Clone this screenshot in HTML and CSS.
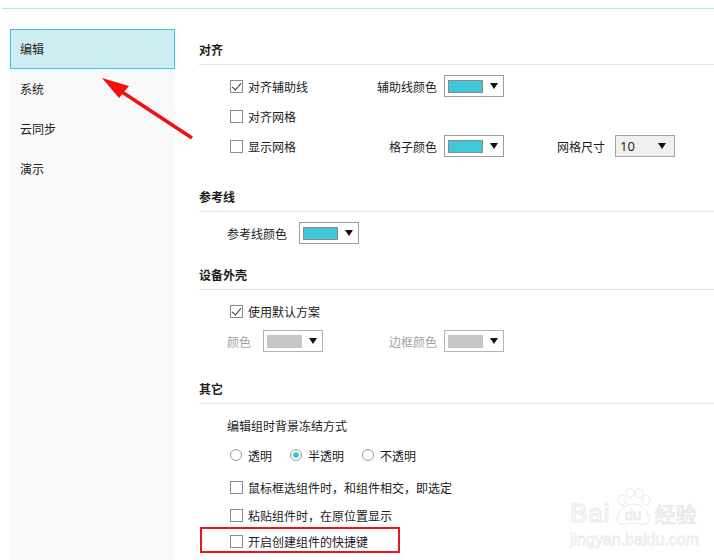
FILE: index.html
```html
<!DOCTYPE html>
<html lang="zh-CN">

<head>
    <meta charset="UTF-8">
    <meta name="viewport" content="width=device-width, initial-scale=1.0">
    <title>设置</title>
    <link rel="stylesheet" href="styles.css">
</head>

<body>

    <div class="topline"></div>

    <div class="page">
        <nav class="side">
            <div class="side-item active">编辑</div>
            <div class="side-item">系统</div>
            <div class="side-item">云同步</div>
            <div class="side-item">演示</div>
        </nav>

        <div class="content">

            <!-- 对齐 -->
            <div class="section">
                <div class="sec-title">对齐</div>
                <div class="rows">
                    <div class="row">
                        <div class="cell-a"><span class="cb checked"></span>对齐辅助线</div>
                        <div class="lab-r">辅助线颜色</div>
                        <div class="picker"><span class="swatch"></span><span class="caret"></span></div>
                    </div>
                    <div class="row">
                        <div class="cell-a"><span class="cb"></span>对齐网格</div>
                    </div>
                    <div class="row">
                        <div class="cell-a"><span class="cb"></span>显示网格</div>
                        <div class="lab-r">格子颜色</div>
                        <div class="picker"><span class="swatch"></span><span class="caret"></span></div>
                        <div class="lab-r2">网格尺寸</div>
                        <div class="select">10<span class="caret"></span></div>
                    </div>
                </div>
            </div>

            <!-- 参考线 -->
            <div class="section sec-2">
                <div class="sec-title">参考线</div>
                <div class="rows">
                    <div class="row">
                        <span class="lab">参考线颜色</span>
                        <div class="picker"><span class="swatch"></span><span class="caret"></span></div>
                    </div>
                </div>
            </div>

            <!-- 设备外壳 -->
            <div class="section sec-3">
                <div class="sec-title">设备外壳</div>
                <div class="rows">
                    <div class="row">
                        <div class="cell-a"><span class="cb checked"></span>使用默认方案</div>
                    </div>
                    <div class="row">
                        <div class="cell-a">
                            <span class="lab off">颜色</span>
                            <div class="picker off"><span class="swatch"></span><span class="caret"></span></div>
                        </div>
                        <div class="lab-r off">边框颜色</div>
                        <div class="picker off"><span class="swatch"></span><span class="caret"></span></div>
                    </div>
                </div>
            </div>

            <!-- 其它 -->
            <div class="section sec-4">
                <div class="sec-title">其它</div>
                <div class="rows">
                    <div class="row">编辑组时背景冻结方式</div>
                    <div class="row">
                        <span class="radio-item"><span class="radio"></span>透明</span>
                        <span class="radio-item"><span class="radio on"></span>半透明</span>
                        <span class="radio-item"><span class="radio"></span>不透明</span>
                    </div>
                    <div class="row row-sm first-sm"><span class="cb"></span>鼠标框选组件时，和组件相交，即选定</div>
                    <div class="row row-sm"><span class="cb"></span>粘贴组件时，在原位置显示</div>
                    <div class="mark">
                        <div class="row-in"><span class="cb"></span>开启创建组件的快捷键</div>
                    </div>
                </div>
            </div>

        </div>
    </div>

    <!-- red annotation arrow -->
    <svg class="arrow" width="714" height="560" viewBox="0 0 714 560">
        <line x1="192" y1="138" x2="116" y2="88" stroke="#f50f0f" stroke-width="3.5" />
        <polygon points="102,78 129,86 119,98" fill="#f50f0f" />
    </svg>

    <!-- watermark -->
    <div class="wm">
        <div class="wm-top">
            <span class="wm-bai">Bai</span>
            <svg class="paw" width="40" height="38" viewBox="0 0 40 38">
                <ellipse cx="9" cy="12" rx="4" ry="5" fill="none" stroke="#e8e8e8" />
                <ellipse cx="17" cy="5" rx="4" ry="4.5" fill="none" stroke="#e8e8e8" />
                <ellipse cx="26" cy="5" rx="4" ry="4.5" fill="none" stroke="#e8e8e8" />
                <ellipse cx="33" cy="12" rx="4" ry="5" fill="none" stroke="#e8e8e8" />
                <path d="M4 30 Q8 16 20 16 Q32 16 37 30 Q37 37 28 36 Q20 34 12 36 Q3 37 4 30 Z" fill="none" stroke="#e8e8e8" />
                <text x="20" y="32" text-anchor="middle" class="paw-du">du</text>
            </svg>
            <span class="wm-jy">经验</span>
        </div>
        <div class="wm-url">jingyan.baidu.com</div>
    </div>

</body>

</html>
```

FILE: styles.css
```css
* {
    box-sizing: border-box;
}

body {
    margin: 0;
    background: #fff;
    font-family: "Noto Sans CJK SC", "Liberation Sans", sans-serif;
    font-size: 12px;
    color: #1c1c1c;
    width: 714px;
    height: 560px;
    overflow: hidden;
    position: relative;
}

.topline {
    height: 1px;
    margin: 8px 0 0 2px;
    background: #a9e7ed;
}

.page {
    display: flex;
    padding: 20px 0 0 10px;
}

/* left menu */
.side {
    width: 165px;
    height: 531px;
    background: #f9f9f9;
}

.side-item {
    height: 40px;
    line-height: 40px;
    padding-left: 10px;
    color: #222;
}

.side-item.active {
    background: #cdedf2;
    border: 1px solid #3fc7d7;
    line-height: 38px;
    padding-left: 9px;
}

/* settings */
.content {
    flex: 1;
    margin-left: 24px;
    padding-top: 11px;
}

.sec-title {
    font-weight: bold;
    line-height: 20px;
    padding-bottom: 4px;
    border-bottom: 1px solid #e3e3e3;
}

.rows {
    padding-top: 6px;
}

.sec-2 {
    margin-top: 26px;
}

.sec-3 {
    margin-top: 17px;
}

.sec-4 {
    margin-top: 23px;
}

.row {
    display: flex;
    align-items: center;
    height: 30px;
    padding-left: 28px;
}

.row-sm {
    height: 28px;
}

.first-sm {
    margin-top: 3px;
}

.cell-a {
    display: flex;
    align-items: center;
    width: 143px;
}

.lab {
    margin-right: 12px;
}

.off {
    color: #a2a2a2;
}

.lab-r {
    width: 67px;
    text-align: right;
    margin-right: 7px;
}

.lab-r2 {
    width: 101px;
    text-align: right;
    margin-right: 10px;
}

/* checkbox */
.cb {
    position: relative;
    width: 13px;
    height: 13px;
    border: 1px solid #8c8c8c;
    background: #fff;
    margin: 0 5px 0 3px;
    flex-shrink: 0;
}

.cb.checked::after {
    content: "";
    position: absolute;
    left: 3px;
    top: 0px;
    width: 4px;
    height: 8px;
    border-right: 1px solid #333;
    border-bottom: 1px solid #333;
    transform: rotate(40deg);
}

/* radio */
.radio-item {
    display: flex;
    align-items: center;
    margin-right: 15px;
}

.radio {
    width: 12px;
    height: 12px;
    border: 1px solid #9c9c9c;
    border-radius: 50%;
    margin: 0 6px 0 3px;
    background: #fff;
}

.radio.on {
    background: radial-gradient(circle, #38c4d6 0, #38c4d6 2.2px, #bfeaf0 3px, #fff 4px);
}

/* color picker */
.picker {
    display: flex;
    align-items: center;
    width: 60px;
    height: 22px;
    border: 1px solid #9d9d9d;
    background: #fff;
    padding: 0 5px 0 3px;
}

.swatch {
    width: 35px;
    height: 13px;
    background: #3fc8d9;
    border: 1px solid #8a8a8a;
}

.picker.off {
    border-color: #b4b4b4;
}

.picker.off .swatch {
    background: #c6c6c6;
    border-color: #c6c6c6;
}

.caret {
    margin-left: auto;
    width: 0;
    height: 0;
    border-left: 4px solid transparent;
    border-right: 4px solid transparent;
    border-top: 6px solid #111;
}

.select {
    display: flex;
    align-items: center;
    width: 60px;
    height: 22px;
    border: 1px solid #a4a4a4;
    background: #f0f0f0;
    padding: 0 8px 0 4px;
    font-family: "Open Sans", "Noto Sans CJK SC", sans-serif;
    font-size: 13px;
    color: #111;
}

/* highlighted row */
.mark {
    width: 200px;
    height: 26px;
    margin: -2px 0 0 1px;
    border: 2px solid #e8161c;
    padding: 2px 0 0 25px;
}

.row-in {
    display: flex;
    align-items: center;
    height: 20px;
}

/* annotation */
.arrow {
    position: absolute;
    left: 0;
    top: 0;
    pointer-events: none;
}

/* watermark */
.wm {
    position: absolute;
    left: 570px;
    top: 484px;
    width: 140px;
    color: #fff;
}

.wm-top {
    display: flex;
    align-items: flex-end;
    height: 42px;
}

.wm-bai {
    font-family: "Liberation Sans", sans-serif;
    font-size: 26px;
    line-height: 26px;
    letter-spacing: 1px;
    -webkit-text-stroke: 1px #e8e8e8;
}

.paw {
    margin: 0 2px 0 2px;
}

.paw-du {
    font-family: "Liberation Sans", sans-serif;
    font-size: 15px;
    fill: #fff;
    stroke: #e8e8e8;
    stroke-width: 0.8;
}

.wm-jy {
    font-family: "Noto Sans CJK SC", sans-serif;
    font-size: 21px;
    line-height: 26px;
    -webkit-text-stroke: 1px #e8e8e8;
}

.wm-url {
    font-family: "Liberation Sans", sans-serif;
    font-size: 16px;
    line-height: 20px;
    margin-top: 4px;
    -webkit-text-stroke: 0.8px #eaeaea;
}
```
